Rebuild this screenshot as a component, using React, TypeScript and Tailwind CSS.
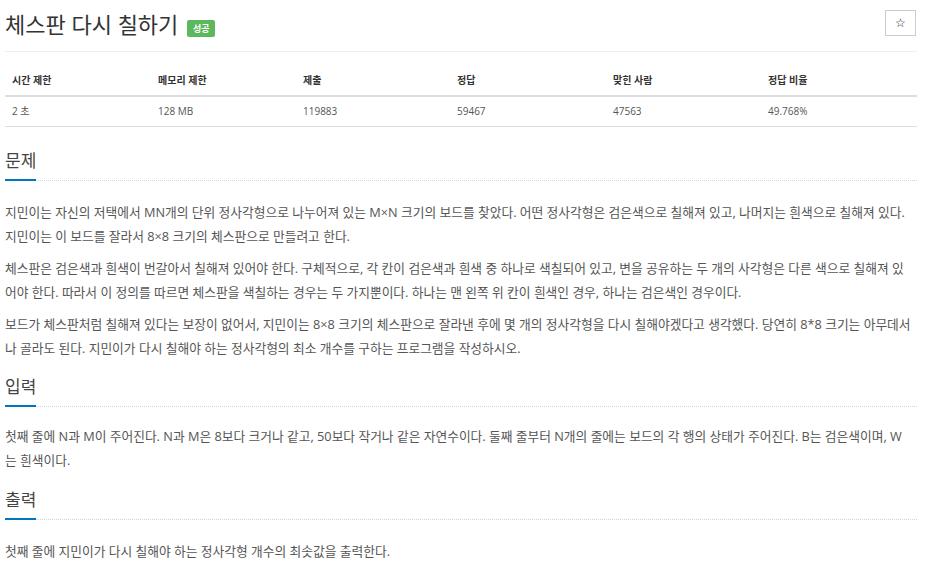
import React from "react";

function Heading({ children }: { children: React.ReactNode }) {
  return (
    <div className="border-b border-dotted border-[#d5d5d5]">
      <h2 className="inline-block -mb-px border-b-2 border-[#0076c0] pb-[6px] text-[17px] leading-[24px] font-normal text-[#444]">
        {children}
      </h2>
    </div>
  );
}

function Lines({ lines }: { lines: string[] }) {
  return (
    <p className="mb-[8px] text-[12.75px] leading-[24px] text-[#555]">
      {lines.map((l, i) => (
        <span key={i} className="block whitespace-nowrap">
          {l}
        </span>
      ))}
    </p>
  );
}

const cols = [
  { h: "시간 제한", v: "2 초", w: "w-[146px]" },
  { h: "메모리 제한", v: "128 MB", w: "w-[145px]" },
  { h: "제출", v: "119883", w: "w-[154px]" },
  { h: "정답", v: "59467", w: "w-[156px]" },
  { h: "맞힌 사람", v: "47563", w: "w-[155px]" },
  { h: "정답 비율", v: "49.768%", w: "w-[156px]" },
];

export default function App() {
  return (
    <div className="min-h-[574px] bg-white font-['Open_Sans','Noto_Sans_CJK_KR',sans-serif]">
      <div className="ml-[5px] w-[912px]">
        {/* title */}
        <div className="flex items-start justify-between border-b border-[#eee] pt-[8px] pb-[11px]">
          <div className="flex items-start">
            <h1 className="text-[22px] leading-[32px] font-normal text-[#333]">체스판 다시 칠하기</h1>
            <span className="ml-[9px] mt-[12px] flex h-[17px] w-[28px] items-center justify-center rounded-[2px] bg-[#5cb85c] text-[9px] font-bold leading-none text-white">
              성공
            </span>
          </div>
          <button className="mt-[2px] mr-[1px] flex h-[26px] w-[31px] items-center justify-center border border-[#ccc] bg-white text-[12px] leading-none text-[#222] font-['DejaVu_Sans',sans-serif]">
            ☆
          </button>
        </div>

        {/* table */}
        <div className="mt-[13px] border-b border-[#ddd]">
          <div className="flex border-b-2 border-[#ddd]">
            {cols.map((c) => (
              <div key={c.h} className={`${c.w} flex h-[30px] items-center pl-[7px] text-[10px] font-bold text-[#333]`}>
                {c.h}
              </div>
            ))}
          </div>
          <div className="flex">
            {cols.map((c) => (
              <div key={c.h} className={`${c.w} flex h-[29px] items-center pl-[7px] text-[10px] text-[#555]`}>
                {c.v}
              </div>
            ))}
          </div>
        </div>

        {/* 문제 */}
        <div className="mt-[22px]">
          <Heading>문제</Heading>
          <div className="mt-[19px]">
            <Lines
              lines={[
                "지민이는 자신의 저택에서 MN개의 단위 정사각형으로 나누어져 있는 M×N 크기의 보드를 찾았다. 어떤 정사각형은 검은색으로 칠해져 있고, 나머지는 흰색으로 칠해져 있다.",
                "지민이는 이 보드를 잘라서 8×8 크기의 체스판으로 만들려고 한다.",
              ]}
            />
            <Lines
              lines={[
                "체스판은 검은색과 흰색이 번갈아서 칠해져 있어야 한다. 구체적으로, 각 칸이 검은색과 흰색 중 하나로 색칠되어 있고, 변을 공유하는 두 개의 사각형은 다른 색으로 칠해져 있",
                "어야 한다. 따라서 이 정의를 따르면 체스판을 색칠하는 경우는 두 가지뿐이다. 하나는 맨 왼쪽 위 칸이 흰색인 경우, 하나는 검은색인 경우이다.",
              ]}
            />
            <Lines
              lines={[
                "보드가 체스판처럼 칠해져 있다는 보장이 없어서, 지민이는 8×8 크기의 체스판으로 잘라낸 후에 몇 개의 정사각형을 다시 칠해야겠다고 생각했다. 당연히 8*8 크기는 아무데서",
                "나 골라도 된다. 지민이가 다시 칠해야 하는 정사각형의 최소 개수를 구하는 프로그램을 작성하시오.",
              ]}
            />
          </div>
        </div>

        {/* 입력 */}
        <div className="mt-[15px]">
          <Heading>입력</Heading>
          <div className="mt-[17px]">
            <Lines
              lines={[
                "첫째 줄에 N과 M이 주어진다. N과 M은 8보다 크거나 같고, 50보다 작거나 같은 자연수이다. 둘째 줄부터 N개의 줄에는 보드의 각 행의 상태가 주어진다. B는 검은색이며, W",
                "는 흰색이다.",
              ]}
            />
          </div>
        </div>

        {/* 출력 */}
        <div className="mt-[16px]">
          <Heading>출력</Heading>
          <div className="mt-[19px]">
            <Lines lines={["첫째 줄에 지민이가 다시 칠해야 하는 정사각형 개수의 최솟값을 출력한다."]} />
          </div>
        </div>
      </div>
    </div>
  );
}
